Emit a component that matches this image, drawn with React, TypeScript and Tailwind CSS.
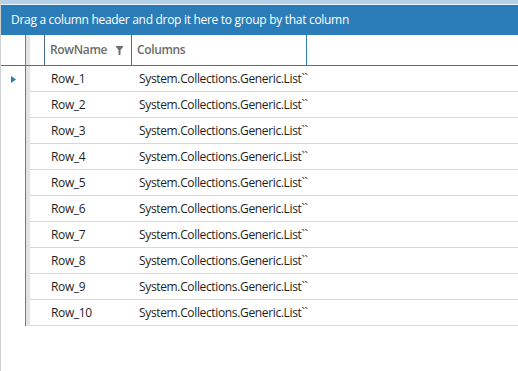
import React from 'react';

const rows = Array.from({ length: 10 }, (_, i) => ({
  name: `Row_${i + 1}`,
  value: 'System.Collections.Generic.List``',
}));

const FilterIcon: React.FC = () => (
  <svg width="7" height="9" viewBox="0 0 7 9" className="block mt-[1px]">
    <path d="M0 0 H7 V1 L4.5 4 V9 H2.5 V4 L0 1 Z" fill="#6f6f6f" />
  </svg>
);

const App: React.FC = () => {
  return (
    <div className="w-[518px] h-[371px] bg-white border-l border-[#d0d0d0] overflow-hidden font-['Open_Sans',sans-serif] text-[12px] tracking-[-0.35px]">
      {/* top strip */}
      <div className="h-[4px] bg-[#b4d2ea]" />
      <div className="h-px bg-[#e8f1f8]" />

      {/* Group panel */}
      <div className="h-[30px] bg-[#2a7db8] text-white flex items-center pl-[10px] tracking-[-0.3px]">
        Drag a column header and drop it here to group by that column
      </div>

      {/* Header */}
      <div className="flex h-[31px] border-b border-[#2a7db8]">
        <div className="w-[24px]" />
        <div className="w-px bg-[#7a7a7a]" />
        <div className="w-[4px] bg-[#e4e4e4]" />
        <div className="w-[15px] border-r border-[#4a6a86]" />
        <div className="w-[87px] border-r border-[#2a7db8] flex items-center pl-[5px] pr-[8px] justify-between font-semibold text-[#6b6b6b]">
          <span>RowName</span>
          <FilterIcon />
        </div>
        <div className="w-[175px] border-r border-[#2a7db8] flex items-center pl-[5px] font-semibold text-[#6b6b6b]">
          Columns
        </div>
        <div className="flex-1" />
      </div>

      {/* Body */}
      <div className="flex">
        <div className="w-[24px] flex flex-col">
          {rows.map((r, i) => (
            <div key={r.name} className="h-[26px] flex items-center pl-[10px]">
              {i === 0 && (
                <svg width="5" height="7" viewBox="0 0 5 7">
                  <path d="M0 0 L5 3.5 L0 7 Z" fill="#2a7db8" />
                </svg>
              )}
            </div>
          ))}
        </div>
        <div className="w-px bg-[#7a7a7a]" />
        <div className="w-[4px] bg-[#e4e4e4]" />
        <div className="flex-1 flex flex-col">
          {rows.map((r) => (
            <div key={r.name} className="h-[26px] flex items-center border-b border-[#d8d8d8] text-[#1e1e1e]">
              <div className="w-[16px]" />
              <div className="w-[88px] pl-[5px]">{r.name}</div>
              <div className="pl-[5px]">{r.value}</div>
            </div>
          ))}
        </div>
      </div>
    </div>
  );
};

export default App;
